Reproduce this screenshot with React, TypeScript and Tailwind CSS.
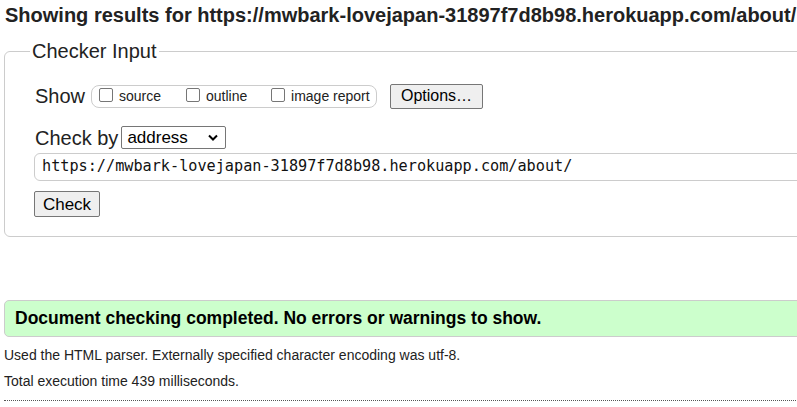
import React from "react";

function Box({ label }: { label: string }) {
  return (
    <label className="flex items-center gap-[6px]">
      <span className="inline-block w-[14px] h-[14px] rounded-[2px] border border-[#767676] bg-white -mt-[3px]" />
      <span className="text-[14px] text-[#222]">{label}</span>
    </label>
  );
}

export default function App() {
  return (
    <div className="w-[797px] h-[407px] overflow-hidden bg-white text-[#222] font-['Liberation_Sans',Arial,sans-serif]">
      <div className="w-[840px] pl-[4px]">
        <h2 className="pl-[1px] pt-[3px] text-[20px] leading-[24px] font-bold text-[#222]">
          Showing results for https://mwbark-lovejapan-31897f7d8b98.herokuapp.com/about/
        </h2>

        <fieldset className="mt-[12px] h-[198px] border border-[#ccc] rounded-[6px] pl-[30px] pr-0">
          <legend className="-ml-[5px] px-[2px] text-[20px] leading-[24px] text-[#222]">Checker Input</legend>

          <div className="mt-[20px] flex items-center h-[26px]">
            <span className="text-[20px] leading-[24px] mr-[6px]">Show</span>
            <div className="flex items-center h-[23px] w-[286px] border border-[#ccc] rounded-[8px] pl-[7px]">
              <div className="w-[87px]"><Box label="source" /></div>
              <div className="w-[85px]"><Box label="outline" /></div>
              <div><Box label="image report" /></div>
            </div>
            <button className="ml-[13px] h-[25px] w-[93px] border border-[#767676] rounded-[2px] bg-[#efefef] text-[16px] text-black leading-none">
              Options…
            </button>
          </div>

          <div className="mt-[17px] flex items-center h-[23px]">
            <span className="text-[20px] leading-[24px] mr-[3px]">Check by</span>
            <div className="relative h-[23px] w-[105px] border border-[#767676] rounded-[2px] bg-white flex items-center pl-[5px]">
              <span className="text-[17px] leading-none text-black">address</span>
              <svg className="absolute right-[6px] top-[6px]" width="12" height="9" viewBox="0 0 12 9">
                <path d="M2 2.5 L6 6.5 L10 2.5" fill="none" stroke="#000" strokeWidth="2" />
              </svg>
            </div>
          </div>

          <div className="mt-[4px] -ml-[1px] h-[28px] border border-[#ccc] rounded-l-[6px] flex items-center pl-[7px]">
            <span className="text-[15.2px] text-[#111] font-['DejaVu_Sans_Mono',monospace] leading-none">
              https://mwbark-lovejapan-31897f7d8b98.herokuapp.com/about/
            </span>
          </div>

          <button className="mt-[10px] -ml-[1px] h-[26px] w-[66px] border border-[#767676] rounded-[2px] bg-[#efefef] text-[17px] text-black leading-none">
            Check
          </button>
        </fieldset>

        <div className="mt-[63px] h-[37px] border border-[#ccc] rounded-l-[5px] bg-[#ccffcc] flex items-center pl-[10px]">
          <span className="text-[17.5px] font-bold text-black">Document checking completed. No errors or warnings to show.</span>
        </div>

        <p className="mt-[9px] text-[14px] leading-[18px]">
          Used the HTML parser. Externally specified character encoding was utf-8.
        </p>
        <p className="mt-[8px] text-[14px] leading-[18px]">Total execution time 439 milliseconds.</p>
        <div className="mt-[10px] border-t border-dotted border-[#555]" />
      </div>
    </div>
  );
}
